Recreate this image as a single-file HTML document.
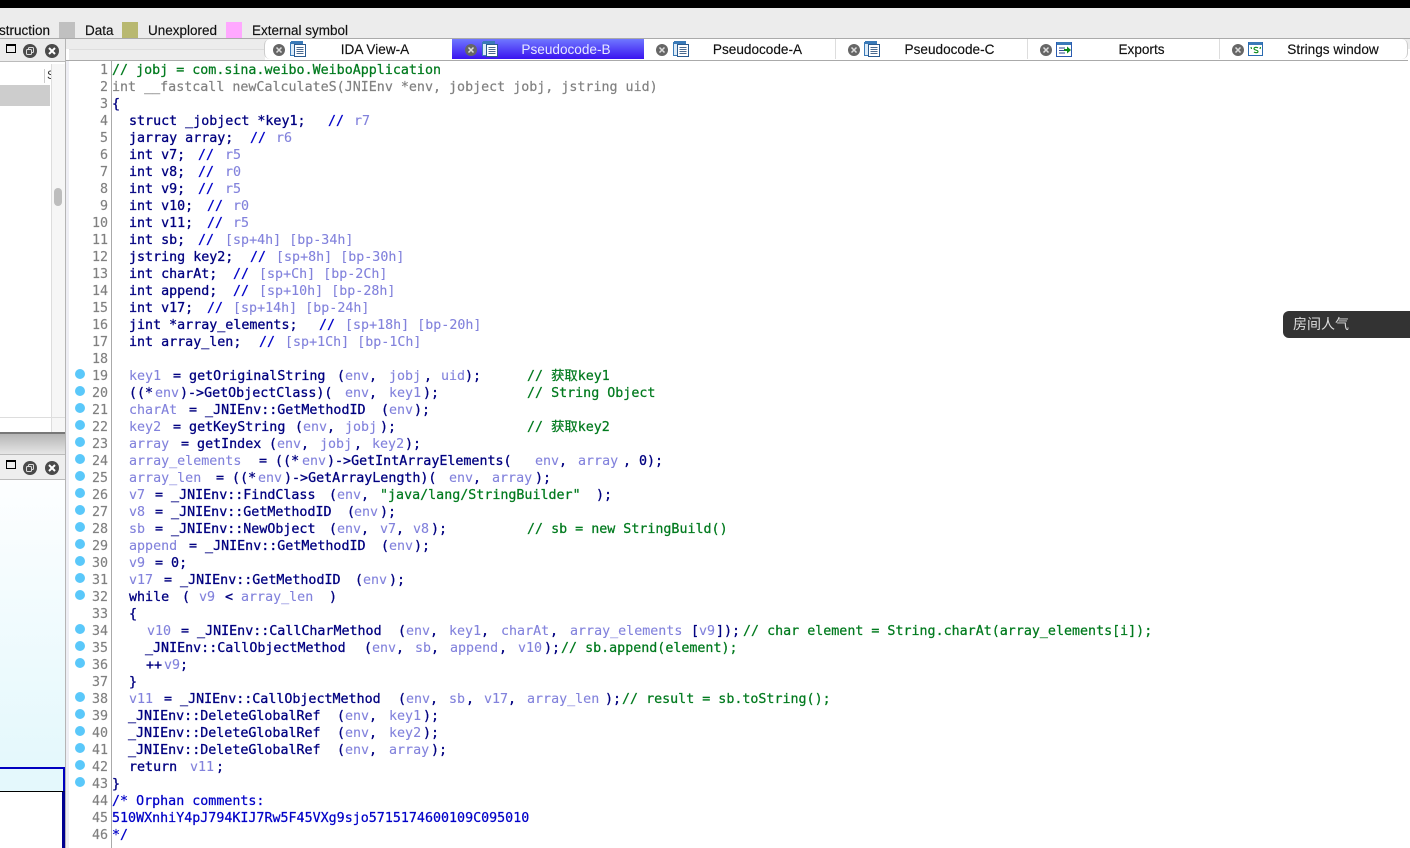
<!DOCTYPE html>
<html><head><meta charset="utf-8"><title>IDA Pseudocode-B</title>
<style>
html,body{margin:0;padding:0;background:#fff}
body{width:1410px;height:848px;position:relative;overflow:hidden;font-family:"Liberation Sans",sans-serif;color:#000}
.a{position:absolute}
.lg{position:absolute;top:22px;font-size:13.5px;line-height:17px;white-space:nowrap;color:#111;-webkit-text-stroke:.15px #111}
.sw{position:absolute;top:22px;width:16px;height:16px}
.tab{position:absolute;top:39px;height:20px;width:192px;background:#fff;border-right:1px solid #ddd;box-sizing:border-box}
.tab span{position:absolute;top:2px;left:0;width:100%;text-align:center;font-size:13.6px;line-height:17px;white-space:nowrap;color:#111;-webkit-text-stroke:.15px #111}
.x{position:absolute;width:12px;height:12px;top:5px;left:9px}
.ic{position:absolute;width:16px;height:16px;top:2px;left:25px}
#code{position:absolute;left:0;top:0;width:1410px;height:848px;font-family:"DejaVu Sans Mono","Noto Sans CJK SC",monospace;font-size:13.33px;line-height:17px;filter:blur(.25px)}
.l{position:absolute;left:0;width:1300px;height:17px;margin-top:2px}
.l b,.l i,.l u,.l s,.l em,.l tt{position:absolute;top:0;font-weight:400;font-style:normal;text-decoration:none;white-space:pre;font-family:inherit;font-size:inherit}
.l b{color:#000080;-webkit-text-stroke:.3px #000080}
.l i{color:#8282dc;-webkit-text-stroke:.12px #8282dc}
.l u{color:#007a1e;-webkit-text-stroke:.25px #007a1e}
.l s{color:#0000c8;-webkit-text-stroke:.25px #0000c8}
.l tt{color:#808080;-webkit-text-stroke:.2px #808080}
#gut{position:absolute;left:70px;top:62px;width:38px;text-align:right;white-space:pre;color:#808080;-webkit-text-stroke:.15px #808080}
.d{position:absolute;left:75px;width:10px;height:10px;border-radius:50%;background:#5ac8fa}
</style></head><body>
<svg width="0" height="0" style="position:absolute"><defs>
<g id="doc"><rect x=".5" y="1.5" width="10" height="13" fill="#dcebf8" stroke="#3a7ab8"/><rect x="1" y="0" width="12" height="3" fill="#3a7ab8"/><rect x="4.5" y="3.5" width="11" height="12" fill="#fff" stroke="#2a5a90"/><path d="M6.5 6.5h7M6.5 8.5h7M6.5 10.5h7M6.5 12.5h7" stroke="#4a6a90" stroke-width="1"/></g>
<g id="cl"><circle cx="6" cy="6" r="6" fill="#666"/><path d="M3.5 3.5l5 5M8.5 3.5l-5 5" stroke="#ddd" stroke-width="1.5"/></g>
<g id="cl2"><circle cx="7" cy="7" r="7" fill="#4a4a4a"/><path d="M4 4l6 6M10 4l-6 6" stroke="#fff" stroke-width="2"/></g>
<g id="rs"><circle cx="7" cy="7" r="7" fill="#4a4a4a"/><rect x="5.5" y="3.5" width="5" height="5" rx="1" fill="none" stroke="#ddd"/><rect x="3.5" y="5.5" width="5" height="5" rx="1" fill="#4a4a4a" stroke="#ddd"/></g>
</defs></svg>

<!-- top -->
<div class="a" style="left:0;top:8px;width:1410px;height:31px;background:#ececec"></div>
<div class="a" style="left:0;top:0;width:1410px;height:8px;background:#000"></div>
<div class="lg" style="left:-20px;width:70px;text-align:right;direction:rtl;height:17px"><bdi>Instruction</bdi></div>
<div class="sw" style="left:59px;background:#c0c0c0"></div>
<div class="lg" style="left:85px">Data</div>
<div class="sw" style="left:122px;background:#b8b870"></div>
<div class="lg" style="left:148px">Unexplored</div>
<div class="sw" style="left:226px;background:#ffa8ff"></div>
<div class="lg" style="left:252px">External symbol</div>

<!-- tab bar -->
<div class="a" style="left:0;top:38px;width:1410px;height:1px;background:#aaa"></div>
<div class="a" style="left:66px;top:39px;width:1344px;height:10px;background:#ececec"></div>
<div class="a" style="left:69px;top:49px;width:196px;height:11px;background:#ededed;border-top:1px solid #ddd;box-sizing:border-box"></div>
<div class="a" style="left:0;top:39px;width:65px;height:23px;background:#ececec"></div>
<div class="a" style="left:66px;top:60px;width:1342px;height:1px;background:#aaa"></div>

<div class="tab" style="left:264px;border-radius:6px 0 0 6px;border-left:1px solid #ccc"><svg class="x" viewBox="0 0 12 12" style="left:8px"><use href="#cl"/></svg><svg class="ic" viewBox="0 0 16 16" style="left:25px"><use href="#doc"/></svg><span style="left:0;width:220px">IDA View-A</span></div>
<div class="tab" style="left:452px;background:linear-gradient(#6f78ff,#3a14f0);border-right:0"><svg class="x" viewBox="0 0 12 12" style="left:13px"><use href="#cl"/></svg><svg class="ic" viewBox="0 0 16 16" style="left:30px"><use href="#doc"/></svg><span style="left:18px;color:#e6e8ff;-webkit-text-stroke:0">Pseudocode-B</span></div>
<div class="tab" style="left:644px"><svg class="x" viewBox="0 0 12 12" style="left:12px"><use href="#cl"/></svg><svg class="ic" viewBox="0 0 16 16" style="left:29px"><use href="#doc"/></svg><span style="left:18px">Pseudocode-A</span></div>
<div class="tab" style="left:836px"><svg class="x" viewBox="0 0 12 12" style="left:12px"><use href="#cl"/></svg><svg class="ic" viewBox="0 0 16 16" style="left:28px"><use href="#doc"/></svg><span style="left:18px">Pseudocode-C</span></div>
<div class="tab" style="left:1028px"><svg class="x" viewBox="0 0 12 12" style="left:12px"><use href="#cl"/></svg><svg class="ic" viewBox="0 0 16 16" style="left:28px"><rect x=".5" y="1.5" width="15" height="14" fill="#fff" stroke="#2a5ab0"/><rect x="1" y="1" width="14" height="3" fill="#3a7ab8"/><path d="M3 7h6M3 9.500h6M3 12h6" stroke="#2a4a90"/><path d="M8 8h3V5.500l4 3.500-4 3.500V10H8z" fill="#0a8a1a"/></svg><span style="left:18px">Exports</span></div>
<div class="tab" style="left:1220px;width:188px;border-right:1px solid #ccc;border-radius:0 6px 6px 0"><svg class="x" viewBox="0 0 12 12" style="left:12px"><use href="#cl"/></svg><svg class="ic" viewBox="0 0 16 16" style="left:28px"><rect x=".5" y="1.500" width="14" height="13" fill="#fff" stroke="#2a6ab0"/><rect x="1" y="1" width="13" height="3" fill="#3a7ab8"/><path d="M10 7c-1-1-4-1-4 .8 0 1.700 4 1 4 2.700 0 1.600-3 1.500-4 .5M3 6l.5 2M12.500 6l-.5 2" stroke="#0a8a1a" fill="none" stroke-width="1.100"/></svg><span style="left:21px;width:184px">Strings window</span></div>

<!-- left panel -->
<div class="a" style="left:0;top:61px;width:65px;height:1px;background:#bbb"></div>
<div class="a" style="left:65px;top:39px;width:1px;height:809px;background:#b5b5b5"></div>
<div class="a" style="left:66px;top:61px;width:3px;height:787px;background:#eeeef4"></div>
<div class="a" style="left:6px;top:44px;width:8px;height:6px;border:1px solid #000;border-top-width:2px"></div>
<svg class="a" style="left:23px;top:44px" width="14" height="14" viewBox="0 0 14 14"><use href="#rs"/></svg>
<svg class="a" style="left:45px;top:44px" width="14" height="14" viewBox="0 0 14 14"><use href="#cl2"/></svg>
<div class="a" style="left:0;top:64px;width:65px;height:369px;background:#fff"></div>
<div class="a" style="left:51px;top:64px;width:14px;height:369px;background:#f6f6f6;border-left:1px solid #ddd;box-sizing:border-box"></div>
<div class="a" style="left:44px;top:69px;width:1px;height:14px;background:#ccc"></div>
<div class="a" style="left:47px;top:68px;font-size:12px;line-height:14px;color:#333;width:4px;overflow:hidden">S</div>
<div class="a" style="left:0;top:85px;width:50px;height:21px;background:#cdcdcd"></div>
<div class="a" style="left:54px;top:188px;width:8px;height:18px;border-radius:4px;background:#bdbdbd"></div>
<div class="a" style="left:0;top:417px;width:65px;height:1px;background:#ddd"></div>
<div class="a" style="left:0;top:432px;width:65px;height:2px;background:#777"></div>
<div class="a" style="left:0;top:434px;width:65px;height:20px;background:linear-gradient(#b5b5b5,#e6e6e6)"></div>
<div class="a" style="left:0;top:454px;width:65px;height:25px;background:#eee;border-top:1px solid #bbb;box-sizing:border-box"></div>
<div class="a" style="left:0;top:479px;width:65px;height:1px;background:#bbb"></div>
<div class="a" style="left:6px;top:460px;width:8px;height:6px;border:1px solid #000;border-top-width:2px"></div>
<svg class="a" style="left:23px;top:461px" width="14" height="14" viewBox="0 0 14 14"><use href="#rs"/></svg>
<svg class="a" style="left:45px;top:461px" width="14" height="14" viewBox="0 0 14 14"><use href="#cl2"/></svg>
<div class="a" style="left:0;top:480px;width:65px;height:287px;background:linear-gradient(#fdfeff,#e4f8fc)"></div>
<div class="a" style="left:0;top:767px;width:65px;height:24px;background:#e4f8fc;border-top:2px solid #0000c0;border-right:2px solid #0000c0;box-sizing:border-box"></div>
<div class="a" style="left:0;top:791px;width:65px;height:57px;background:#fff;border-top:1px solid #000;border-right:3px solid #000090;box-sizing:border-box"></div>

<!-- gutter -->
<div class="a" style="left:111px;top:61px;width:1px;height:787px;background:#aaa"></div>
<div id="code">
<div id="gut">1
2
3
4
5
6
7
8
9
10
11
12
13
14
15
16
17
18
19
20
21
22
23
24
25
26
27
28
29
30
31
32
33
34
35
36
37
38
39
40
41
42
43
44
45
46</div>
<div class="d" style="top:369px"></div><div class="d" style="top:386px"></div><div class="d" style="top:403px"></div><div class="d" style="top:420px"></div><div class="d" style="top:437px"></div><div class="d" style="top:454px"></div><div class="d" style="top:471px"></div><div class="d" style="top:488px"></div><div class="d" style="top:505px"></div><div class="d" style="top:522px"></div><div class="d" style="top:539px"></div><div class="d" style="top:556px"></div><div class="d" style="top:573px"></div><div class="d" style="top:590px"></div><div class="d" style="top:624px"></div><div class="d" style="top:641px"></div><div class="d" style="top:658px"></div><div class="d" style="top:692px"></div><div class="d" style="top:709px"></div><div class="d" style="top:726px"></div><div class="d" style="top:743px"></div><div class="d" style="top:760px"></div><div class="d" style="top:777px"></div>

<div class="l" style="top:60px"><u style="left:112px">// jobj = com.sina.weibo.WeiboApplication</u></div>
<div class="l" style="top:77px"><tt style="left:112px">int __fastcall newCalculateS(JNIEnv *env, jobject jobj, jstring uid)</tt></div>
<div class="l" style="top:94px"><b style="left:112px">{</b></div>
<div class="l" style="top:111px"><b style="left:129px">struct _jobject *key1;</b><s style="left:328px">//</s><i style="left:354px">r7</i></div>
<div class="l" style="top:128px"><b style="left:129px">jarray array;</b><s style="left:250px">//</s><i style="left:276px">r6</i></div>
<div class="l" style="top:145px"><b style="left:129px">int v7;</b><s style="left:198px">//</s><i style="left:225px">r5</i></div>
<div class="l" style="top:162px"><b style="left:129px">int v8;</b><s style="left:198px">//</s><i style="left:225px">r0</i></div>
<div class="l" style="top:179px"><b style="left:129px">int v9;</b><s style="left:198px">//</s><i style="left:225px">r5</i></div>
<div class="l" style="top:196px"><b style="left:129px">int v10;</b><s style="left:207px">//</s><i style="left:233px">r0</i></div>
<div class="l" style="top:213px"><b style="left:129px">int v11;</b><s style="left:207px">//</s><i style="left:233px">r5</i></div>
<div class="l" style="top:230px"><b style="left:129px">int sb;</b><s style="left:198px">//</s><i style="left:225px">[sp+4h] [bp-34h]</i></div>
<div class="l" style="top:247px"><b style="left:129px">jstring key2;</b><s style="left:250px">//</s><i style="left:276px">[sp+8h] [bp-30h]</i></div>
<div class="l" style="top:264px"><b style="left:129px">int charAt;</b><s style="left:233px">//</s><i style="left:259px">[sp+Ch] [bp-2Ch]</i></div>
<div class="l" style="top:281px"><b style="left:129px">int append;</b><s style="left:233px">//</s><i style="left:259px">[sp+10h] [bp-28h]</i></div>
<div class="l" style="top:298px"><b style="left:129px">int v17;</b><s style="left:207px">//</s><i style="left:233px">[sp+14h] [bp-24h]</i></div>
<div class="l" style="top:315px"><b style="left:129px">jint *array_elements;</b><s style="left:319px">//</s><i style="left:345px">[sp+18h] [bp-20h]</i></div>
<div class="l" style="top:332px"><b style="left:129px">int array_len;</b><s style="left:259px">//</s><i style="left:285px">[sp+1Ch] [bp-1Ch]</i></div>

<div class="l" style="top:366px"><i style="left:129px">key1</i><b style="left:173px">= getOriginalString</b><b style="left:337px">(</b><i style="left:345px">env</i><b style="left:369px">,</b><i style="left:389px">jobj</i><b style="left:424px">,</b><i style="left:441px">uid</i><b style="left:465px">);</b><u style="left:527px">// 获取key1</u></div>
<div class="l" style="top:383px"><b style="left:129px">((*</b><i style="left:155px">env</i><b style="left:180px">)-&gt;GetObjectClass)(</b><i style="left:345px">env</i><b style="left:369px">,</b><i style="left:389px">key1</i><b style="left:423px">);</b><u style="left:527px">// String Object</u></div>
<div class="l" style="top:400px"><i style="left:129px">charAt</i><b style="left:189px">= _JNIEnv::GetMethodID</b><b style="left:381px">(</b><i style="left:389px">env</i><b style="left:414px">);</b></div>
<div class="l" style="top:417px"><i style="left:129px">key2</i><b style="left:173px">= getKeyString</b><b style="left:295px">(</b><i style="left:303px">env</i><b style="left:327px">,</b><i style="left:345px">jobj</i><b style="left:380px">);</b><u style="left:527px">// 获取key2</u></div>
<div class="l" style="top:434px"><i style="left:129px">array</i><b style="left:181px">= getIndex</b><b style="left:269px">(</b><i style="left:277px">env</i><b style="left:301px">,</b><i style="left:320px">jobj</i><b style="left:354px">,</b><i style="left:372px">key2</i><b style="left:405px">);</b></div>
<div class="l" style="top:451px"><i style="left:129px">array_elements</i><b style="left:259px">= ((*</b><i style="left:302px">env</i><b style="left:327px">)-&gt;GetIntArrayElements(</b><i style="left:535px">env</i><b style="left:559px">,</b><i style="left:578px">array</i><b style="left:623px">,</b><b style="left:639px">0);</b></div>
<div class="l" style="top:468px"><i style="left:129px">array_len</i><b style="left:216px">= ((*</b><i style="left:258px">env</i><b style="left:284px">)-&gt;GetArrayLength)(</b><i style="left:449px">env</i><b style="left:473px">,</b><i style="left:492px">array</i><b style="left:535px">);</b></div>
<div class="l" style="top:485px"><i style="left:129px">v7</i><b style="left:155px">= _JNIEnv::FindClass</b><b style="left:329px">(</b><i style="left:337px">env</i><b style="left:361px">,</b><u style="left:380px">"java/lang/StringBuilder"</u><b style="left:596px">);</b></div>
<div class="l" style="top:502px"><i style="left:129px">v8</i><b style="left:155px">= _JNIEnv::GetMethodID</b><b style="left:347px">(</b><i style="left:354px">env</i><b style="left:380px">);</b></div>
<div class="l" style="top:519px"><i style="left:129px">sb</i><b style="left:155px">= _JNIEnv::NewObject</b><b style="left:329px">(</b><i style="left:337px">env</i><b style="left:361px">,</b><i style="left:380px">v7</i><b style="left:396px">,</b><i style="left:413px">v8</i><b style="left:431px">);</b><u style="left:527px">// sb = new StringBuild()</u></div>
<div class="l" style="top:536px"><i style="left:129px">append</i><b style="left:189px">= _JNIEnv::GetMethodID</b><b style="left:381px">(</b><i style="left:389px">env</i><b style="left:414px">);</b></div>
<div class="l" style="top:553px"><i style="left:129px">v9</i><b style="left:155px">= 0;</b></div>
<div class="l" style="top:570px"><i style="left:129px">v17</i><b style="left:164px">= _JNIEnv::GetMethodID</b><b style="left:355px">(</b><i style="left:363px">env</i><b style="left:389px">);</b></div>
<div class="l" style="top:587px"><b style="left:129px">while</b><b style="left:182px">(</b><i style="left:199px">v9</i><b style="left:225px">&lt;</b><i style="left:241px">array_len</i><b style="left:329px">)</b></div>
<div class="l" style="top:604px"><b style="left:129px">{</b></div>
<div class="l" style="top:621px"><i style="left:147px">v10</i><b style="left:181px">= _JNIEnv::CallCharMethod</b><b style="left:398px">(</b><i style="left:406px">env</i><b style="left:430px">,</b><i style="left:449px">key1</i><b style="left:481px">,</b><i style="left:501px">charAt</i><b style="left:550px">,</b><i style="left:570px">array_elements</i><b style="left:691px">[</b><i style="left:699px">v9</i><b style="left:716px">]);</b><u style="left:743px">// char element = String.charAt(array_elements[i]);</u></div>
<div class="l" style="top:638px"><b style="left:145px">_JNIEnv::CallObjectMethod</b><b style="left:364px">(</b><i style="left:372px">env</i><b style="left:396px">,</b><i style="left:415px">sb</i><b style="left:431px">,</b><i style="left:450px">append</i><b style="left:499px">,</b><i style="left:518px">v10</i><b style="left:544px">);</b><u style="left:561px">// sb.append(element);</u></div>
<div class="l" style="top:655px"><b style="left:146px">++</b><i style="left:164px">v9</i><b style="left:180px">;</b></div>
<div class="l" style="top:672px"><b style="left:129px">}</b></div>
<div class="l" style="top:689px"><i style="left:129px">v11</i><b style="left:164px">= _JNIEnv::CallObjectMethod</b><b style="left:398px">(</b><i style="left:406px">env</i><b style="left:430px">,</b><i style="left:449px">sb</i><b style="left:466px">,</b><i style="left:484px">v17</i><b style="left:508px">,</b><i style="left:527px">array_len</i><b style="left:605px">);</b><u style="left:622px">// result = sb.toString();</u></div>
<div class="l" style="top:706px"><b style="left:128px">_JNIEnv::DeleteGlobalRef</b><b style="left:337px">(</b><i style="left:345px">env</i><b style="left:369px">,</b><i style="left:389px">key1</i><b style="left:423px">);</b></div>
<div class="l" style="top:723px"><b style="left:128px">_JNIEnv::DeleteGlobalRef</b><b style="left:337px">(</b><i style="left:345px">env</i><b style="left:369px">,</b><i style="left:389px">key2</i><b style="left:423px">);</b></div>
<div class="l" style="top:740px"><b style="left:128px">_JNIEnv::DeleteGlobalRef</b><b style="left:337px">(</b><i style="left:345px">env</i><b style="left:369px">,</b><i style="left:389px">array</i><b style="left:431px">);</b></div>
<div class="l" style="top:757px"><b style="left:129px">return</b><i style="left:190px">v11</i><b style="left:216px">;</b></div>
<div class="l" style="top:774px"><b style="left:112px">}</b></div>
<div class="l" style="top:791px"><s style="left:112px">/* Orphan comments:</s></div>
<div class="l" style="top:808px"><s style="left:112px">510WXnhiY4pJ794KIJ7Rw5F45VXg9sjo5715174600109C095010</s></div>
<div class="l" style="top:825px"><s style="left:112px">*/</s></div>
</div>

<!-- tooltip -->
<div class="a" style="left:1283px;top:311px;width:127px;height:27px;background:#333;border-radius:6px 0 0 6px"></div>
<div class="a" style="left:1293px;top:315px;font-family:'Liberation Sans','Noto Sans CJK SC',sans-serif;font-size:14px;line-height:18px;color:#ddd">房间人气</div>
</body></html>
